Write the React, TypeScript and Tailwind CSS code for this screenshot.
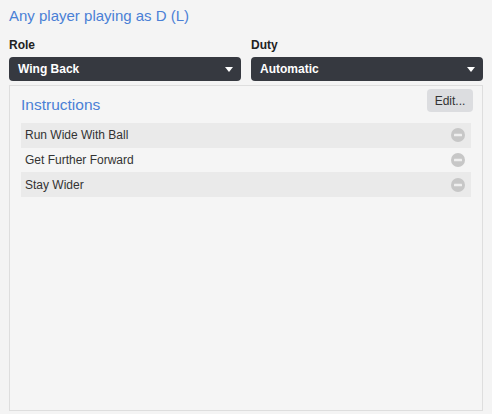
import React from 'react';

const instructions = ['Run Wide With Ball', 'Get Further Forward', 'Stay Wider'];

const Select = ({ value }: { value: string }) => (
  <div className="flex h-[24px] items-center justify-between rounded-[4px] bg-[#363940] pl-[9px] pr-[8px] text-[12px] font-bold text-white">
    <span>{value}</span>
    <svg width="8" height="5" viewBox="0 0 8 5">
      <path d="M0 0h8L4 5z" fill="#fff" />
    </svg>
  </div>
);

const MinusIcon = () => (
  <svg width="14" height="14" viewBox="0 0 14 14">
    <circle cx="7" cy="7" r="7" fill="#c7c7c7" />
    <rect x="3" y="5.8" width="8" height="2.4" rx="0.5" fill="#efefef" />
  </svg>
);

export default function App() {
  return (
    <div
      className="h-[414px] w-[492px] overflow-hidden bg-[#f4f4f4] px-[9px] pt-[7px]"
      style={{ fontFamily: '"Liberation Sans", Arial, sans-serif' }}
    >
      <h1 className="text-[15px] leading-[18px] text-[#4a80d6]">Any player playing as D (L)</h1>

      <div className="mt-[13px] grid grid-cols-2 gap-[10px]">
        <div>
          <div className="mb-[5px] text-[12px] font-bold leading-[14px] text-[#222]">Role</div>
          <Select value="Wing Back" />
        </div>
        <div>
          <div className="mb-[5px] text-[12px] font-bold leading-[14px] text-[#222]">Duty</div>
          <Select value="Automatic" />
        </div>
      </div>

      <div className="mt-[4px] h-[326px] border border-[#dedede] bg-[#f5f5f5] px-[11px] pt-[3px]">
        <div className="flex items-start justify-between">
          <h2 className="pt-[7px] text-[15.5px] leading-[18px] text-[#4a80d6]">Instructions</h2>
          <button className="-mr-[2px] h-[23px] w-[46px] rounded-[4px] bg-[#dcdde0] text-[12px] text-[#333]">
            Edit...
          </button>
        </div>

        <div className="mt-[9px]">
          {instructions.map((label, i) => (
            <div
              key={label}
              className={`flex h-[24.7px] items-center justify-between pl-[4px] pr-[6px] text-[12px] text-[#333] ${
                i % 2 === 0 ? 'bg-[#eaeaea]' : ''
              }`}
            >
              <span>{label}</span>
              <MinusIcon />
            </div>
          ))}
        </div>
      </div>
    </div>
  );
}
